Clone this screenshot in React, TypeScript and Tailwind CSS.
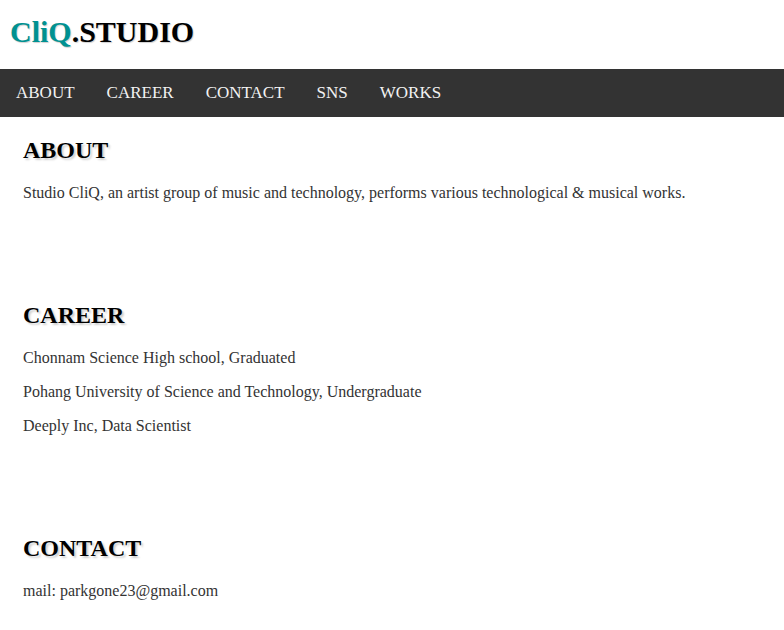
const menu = ["ABOUT", "CAREER", "CONTACT", "SNS", "WORKS"];

const careers = [
  "Chonnam Science High school, Graduated",
  "Pohang University of Science and Technology, Undergraduate",
  "Deeply Inc, Data Scientist",
];

const Heading = ({ children }: { children: string }) => (
  <h2 className="text-[24px] leading-[28px] font-bold text-black mb-5 [text-shadow:2px_2px_2px_#d0d0d0]">
    {children}
  </h2>
);

const App = () => {
  return (
    <div className="min-h-screen bg-white font-['Liberation_Serif',serif]">
      <header className="h-[69px] flex items-center px-[10px] pb-[6px]">
        <h1 className="text-[30px] leading-[34px] font-bold text-black [text-shadow:1px_1px_1px_#d0d0d0]">
          <span className="text-[#009191]">CliQ</span>.STUDIO
        </h1>
      </header>

      <nav className="h-[48px] bg-[#333333] flex items-center">
        {menu.map((item) => (
          <a
            key={item}
            href="#"
            className="px-4 text-[17px] leading-[20px] text-[#f2f2f2]"
          >
            {item}
          </a>
        ))}
      </nav>

      <main className="px-[23px] pt-[19px] flex flex-col gap-[99px] text-[16px] leading-[18px] text-[#333333]">
        <section className="flex flex-col">
          <Heading>ABOUT</Heading>
          <p>
            Studio CliQ, an artist group of music and technology, performs
            various technological &amp; musical works.
          </p>
        </section>

        <section className="flex flex-col">
          <Heading>CAREER</Heading>
          <div className="flex flex-col gap-4">
            {careers.map((c) => (
              <p key={c}>{c}</p>
            ))}
          </div>
        </section>

        <section className="flex flex-col">
          <Heading>CONTACT</Heading>
          <p>mail: parkgone23@gmail.com</p>
        </section>
      </main>
    </div>
  );
};

export default App;
